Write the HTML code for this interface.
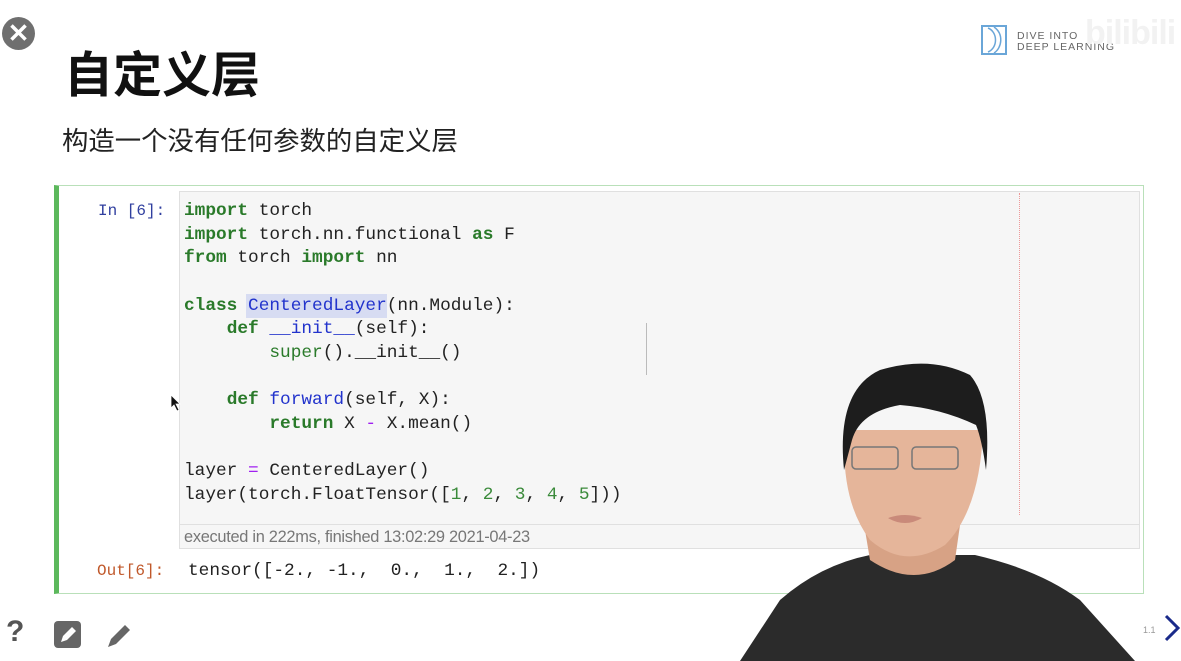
<!DOCTYPE html>
<html><head><meta charset="utf-8"><style>
*{margin:0;padding:0;box-sizing:border-box}
body{width:1181px;height:661px;overflow:hidden;background:#fff;position:relative;font-family:"Liberation Sans","Noto Sans CJK SC",sans-serif}
.abs{position:absolute}
.code{font-family:"Liberation Mono",monospace;font-size:17.8px;line-height:23.65px;color:#222;white-space:pre}
.k{color:#2a7a2a;font-weight:bold}
.b{color:#2233cc}
.g{color:#2a7a2a}
.n{color:#3a8a3a}
.p{color:#a020f0}
</style></head><body>
<div class="abs" style="left:2px;top:17px;width:33px;height:33px;border-radius:50%;background:#6f6f6f;color:#fff;font-size:26px;font-weight:bold;line-height:33px;text-align:center">✕</div>
<div class="abs" style="left:64px;top:46px;font-size:49px;font-weight:bold;color:#111;line-height:60px">自定义层</div>
<div class="abs" style="left:62px;top:125px;font-size:26.4px;color:#222;line-height:32px">构造一个没有任何参数的自定义层</div>
<!-- logo -->
<svg class="abs" style="left:980px;top:22px" width="30" height="34"><path d="M2 4 L26 4 L26 32 L2 32 Z" fill="none" stroke="#6aa6d8" stroke-width="2"/><path d="M8 6 C18 10 18 26 8 30 M14 5 C24 12 22 26 14 31" fill="none" stroke="#6aa6d8" stroke-width="1.5"/></svg>
<div class="abs" style="left:1017px;top:31px;font-size:10.5px;color:#666;letter-spacing:1px;line-height:11px">DIVE INTO<br>DEEP LEARNING</div>
<div class="abs" style="left:1085px;top:14px;font-size:34px;font-weight:bold;color:#f2f2f2;letter-spacing:-1px">bilibili</div>
<!-- cell -->
<div class="abs" style="left:54px;top:185px;width:1090px;height:409px;border:1px solid #b9e0b9;border-left:5px solid #5cb85c"></div>
<div class="abs" style="left:179px;top:191px;width:961px;height:358px;background:#f6f6f6;border:1px solid #e0e0e0"></div>
<div class="abs" style="left:180px;top:524px;width:959px;height:1px;background:#e0e0e0"></div>
<div class="abs" style="left:1019px;top:193px;width:1px;height:322px;border-left:1px dotted #e99"></div>
<div class="abs" style="left:646px;top:323px;width:1px;height:52px;background:#bbb"></div>
<div class="abs code" style="left:98px;top:200px;color:#303f9f;font-size:16px">In [6]:</div>
<div class="abs" style="left:246px;top:294px;width:141px;height:24px;background:#d7dcf2"></div>
<div class="abs code" style="left:184px;top:200px"><span class="k">import</span> torch
<span class="k">import</span> torch.nn.functional <span class="k">as</span> F
<span class="k">from</span> torch <span class="k">import</span> nn

<span class="k">class</span> <span class="b">CenteredLayer</span>(nn.Module):
    <span class="k">def</span> <span class="b">__init__</span>(self):
        <span class="g">super</span>().__init__()

    <span class="k">def</span> <span class="b">forward</span>(self, X):
        <span class="k">return</span> X <span class="p">-</span> X.mean()

layer <span class="p">=</span> CenteredLayer()
layer(torch.FloatTensor([<span class="n">1</span>, <span class="n">2</span>, <span class="n">3</span>, <span class="n">4</span>, <span class="n">5</span>]))</div>
<div class="abs" style="left:184px;top:528px;font-size:16.4px;color:#777;letter-spacing:-0.3px">executed in 222ms, finished 13:02:29 2021-04-23</div>
<div class="abs code" style="left:97px;top:560px;color:#c0582a;font-size:16px">Out[6]:</div>
<div class="abs code" style="left:188px;top:560px">tensor([-2., -1.,  0.,  1.,  2.])</div>
<!-- cursor -->
<svg class="abs" style="left:170px;top:394px" width="12" height="18"><path d="M1 1 L1 14 L4 11 L7 17 L9 16 L6 10 L10 10 Z" fill="#111" stroke="#fff" stroke-width="0.8"/></svg>
<!-- person -->
<svg class="abs" style="left:740px;top:350px" width="441" height="311">
<path d="M0 311 L40 250 Q80 215 130 205 L235 205 Q300 220 340 250 L395 311 Z" fill="#2b2b2b"/>
<path d="M125 180 L130 210 Q175 240 215 210 L220 175 Z" fill="#d7a285"/>
<path d="M105 80 Q100 150 130 190 Q165 220 205 195 Q240 160 243 80 Z" fill="#e5b59a"/>
<path d="M104 120 Q96 40 140 20 Q190 5 230 25 Q252 50 246 120 Q242 90 236 75 Q200 58 160 55 Q120 62 112 90 Z" fill="#1d1d1d"/>
<rect x="112" y="97" width="46" height="22" rx="4" fill="none" stroke="#777" stroke-width="1.5"/>
<rect x="172" y="97" width="46" height="22" rx="4" fill="none" stroke="#777" stroke-width="1.5"/>
<path d="M148 168 Q165 162 182 168 Q165 178 148 168 Z" fill="#c98a7a"/>
</svg>
<!-- bottom icons -->
<div class="abs" style="left:6px;top:615px;font-size:30px;font-weight:bold;color:#555">?</div>
<div class="abs" style="left:54px;top:621px;width:27px;height:27px;border-radius:4px;background:#666"></div>
<svg class="abs" style="left:56px;top:623px" width="24" height="24"><path d="M5 19 L7 13 L16 4 L20 8 L11 17 Z" fill="#fff"/></svg>
<svg class="abs" style="left:105px;top:620px" width="30" height="30"><path d="M3 27 L6 19 L20 5 L25 10 L11 24 Z" fill="#666"/></svg>
<div class="abs" style="left:1143px;top:625px;font-size:9px;color:#999">1.1</div>
<svg class="abs" style="left:1162px;top:613px" width="20" height="30"><path d="M4 3 L16 15 L4 27" fill="none" stroke="#1a2a8a" stroke-width="3"/></svg>
</body></html>
